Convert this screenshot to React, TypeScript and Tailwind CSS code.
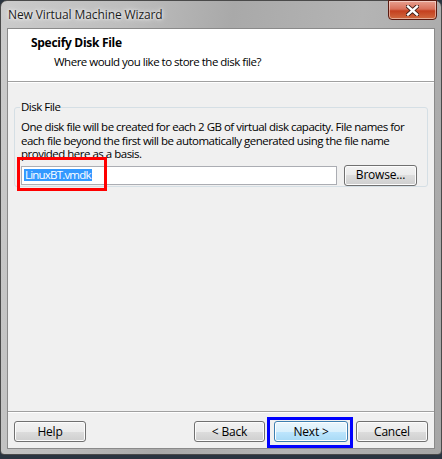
import { useState } from 'react'

function Btn({ label, primary = false, w = 'w-[72px]' }: { label: string; primary?: boolean; w?: string }) {
    return (
        <button
            className={`${w} h-[21px] rounded-[3px] border text-[12px] leading-none tracking-[-0.2px] text-black ${primary ? 'border-[#3c7fb1] bg-[linear-gradient(#eaf6fd_0%,#d9f0fc_50%,#bee6fd_50%,#a7d9f5_100%)] shadow-[inset_0_0_0_1px_#fff]' : 'border-[#707070] bg-[linear-gradient(#f2f2f2_0%,#ebebeb_50%,#dddddd_50%,#cfcfcf_100%)] shadow-[inset_0_0_0_1px_#fcfcfc]'}`}
        >
            {label}
        </button>
    )
}

export default function App() {
    const [fileName, setFileName] = useState('LinuxBT.vmdk')

    return (
        <div className="w-[442px] h-[459px] overflow-hidden bg-[#2a3440] font-['Open_Sans',sans-serif] text-[11.5px] tracking-[-0.5px] text-black">
            {/* Window frame */}
            <div className="relative h-[455px] flex flex-col rounded-t-[7px] rounded-b-[4px] border border-[#4a4a4a] bg-[linear-gradient(100deg,#cbcbcb_0%,#bdbdbd_25%,#a9a9a9_45%,#b4b4b4_70%,#a6a6a6_100%)]">
                {/* Title bar */}
                <div className="h-[27px] flex items-center pl-[7px] shrink-0">
                    <span className="text-[12px] tracking-[-0.1px] text-[#1c1c1c] [text-shadow:0_0_6px_#fff,0_0_3px_#fff]">New Virtual Machine Wizard</span>
                </div>
                <button className="absolute right-[4px] top-[-1px] w-[49px] h-[20px] rounded-b-[4px] border border-[#5a1a10] bg-[linear-gradient(#e8a090_0%,#d9705a_45%,#c4401f_55%,#d06a40_100%)] shadow-[inset_0_0_0_1px_rgba(255,255,255,0.45)] flex items-center justify-center">
                    <svg width="13" height="11" viewBox="0 0 13 11">
                        <path d="M2 1.5 L11 9.5 M11 1.5 L2 9.5" stroke="#3b1a14" strokeWidth="4.2" strokeLinecap="square" />
                        <path d="M2 1.5 L11 9.5 M11 1.5 L2 9.5" stroke="#ffffff" strokeWidth="2.4" strokeLinecap="square" />
                    </svg>
                </button>

                {/* Client area */}
                <div className="mx-[6px] h-[421px] flex flex-col border border-[#8a8a8a] bg-[#f0f0f0]">
                    {/* Header */}
                    <div className="h-[53px] shrink-0 bg-white border-b border-[#a0a0a0] pl-[23px] pt-[5px]">
                        <div className="font-bold text-[12px] leading-[18px] tracking-[-0.3px]">Specify Disk File</div>
                        <div className="pl-[23px] leading-[18px] mt-[1px]">Where would you like to store the disk file?</div>
                    </div>
                    <div className="h-px bg-white shrink-0" />

                    {/* Body */}
                    <div className="flex-1 flex flex-col px-[6px] pt-[17px]">
                        <fieldset className="h-[87px] border border-[#d5dfe5] rounded-[3px] px-[6px] pb-[6px]">
                            <legend className="px-[1px] ml-[-1px] leading-[14px]">Disk File</legend>
                            <p className="mt-[6px] leading-[13.5px] whitespace-nowrap">
                                One disk file will be created for each 2 GB of virtual disk capacity. File names for
                                <br />
                                each file beyond the first will be automatically generated using the file name
                                <br />
                                provided here as a basis.
                            </p>
                            <div className="flex items-center gap-[7px] mt-[4px]">
                                <div className="relative w-[316px] h-[19px] border border-[#abadb3] bg-white flex items-center pl-[2px]">
                                    <span className="bg-[#3399ff] text-white leading-[12px] px-px tracking-[-0.8px]">{fileName}</span>
                                    <input
                                        value={fileName}
                                        onChange={e => setFileName(e.target.value)}
                                        className="absolute inset-0 opacity-0"
                                    />
                                </div>
                                <Btn label="Browse..." w="w-[73px]" />
                            </div>
                        </fieldset>
                        <div className="flex-1" />
                    </div>

                    {/* Footer */}
                    <div className="h-px bg-[#a0a0a0] shrink-0" />
                    <div className="h-px bg-white shrink-0" />
                    <div className="h-[35px] shrink-0 flex items-start pt-[8px] px-[6px]">
                        <Btn label="Help" />
                        <div className="flex-1" />
                        <Btn label="< Back" w="w-[71px]" />
                        <div className="w-[9px]" />
                        <Btn label="Next >" primary w="w-[74px]" />
                        <div className="w-[8px]" />
                        <Btn label="Cancel" />
                    </div>
                </div>

                {/* Annotations */}
                <div className="absolute left-[16px] top-[156px] w-[90px] h-[34px] border-[3px] border-[#ff0000]" />
                <div className="absolute left-[266px] top-[416px] w-[86px] h-[31px] border-[3px] border-[#0000ff]" />
            </div>
        </div>
    )
}
